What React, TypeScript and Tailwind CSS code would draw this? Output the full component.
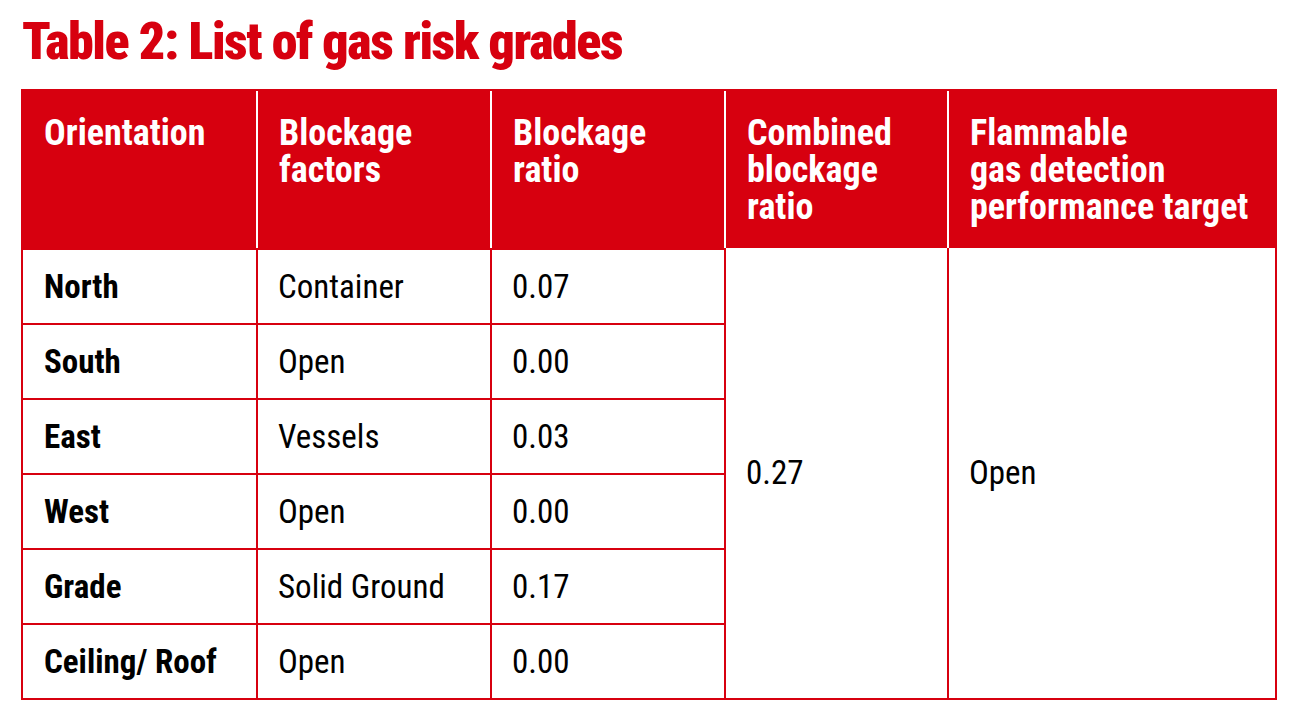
const FONT = "font-['Roboto','Liberation_Sans',sans-serif] [font-stretch:condensed]";

const rows = [
  { o: "North", f: "Container", r: "0.07" },
  { o: "South", f: "Open", r: "0.00" },
  { o: "East", f: "Vessels", r: "0.03" },
  { o: "West", f: "Open", r: "0.00" },
  { o: "Grade", f: "Solid Ground", r: "0.17" },
  { o: "Ceiling/ Roof", f: "Open", r: "0.00" },
];

const headers = [
  ["Orientation"],
  ["Blockage", "factors"],
  ["Blockage", "ratio"],
  ["Combined", "blockage", "ratio"],
  ["Flammable", "gas detection", "performance target"],
];

export default function App() {
  return (
    <div className={`w-[1300px] h-[724px] bg-white pt-[16px] ${FONT}`}>
      <h1 className="ml-[22px] text-[52px] leading-[52px] font-black text-[#d7000f] tracking-[-1.4px]">
        Table 2: List of gas risk grades
      </h1>

      <div className="ml-[21px] mt-[21px] w-[1256px] border-2 border-[#d7000f] grid grid-cols-[233px_234px_234px_223px_328px] grid-rows-[157px_repeat(6,75px)]">
        {headers.map((lines, i) => (
          <div
            key={i}
            className={`bg-[#d7000f] text-white font-bold text-[36px] leading-[37px] pt-[24px] pl-[21px] ${i > 0 ? "border-l-2 border-white" : ""}`}
          >
            {lines.map((l) => (
              <div key={l} className="whitespace-nowrap">{l}</div>
            ))}
          </div>
        ))}

        {rows.map((row, i) => (
          <div key={row.o} className="contents">
            <div className="flex items-center pl-[21px] border-t-2 border-[#d7000f] text-[33px] font-bold text-black whitespace-nowrap">
              {row.o}
            </div>
            <div className="flex items-center pl-[20px] border-t-2 border-l-2 border-[#d7000f] text-[33px] text-black">
              {row.f}
            </div>
            <div className="flex items-center pl-[20px] border-t-2 border-l-2 border-[#d7000f] text-[33px] text-black">
              {row.r}
            </div>
            {i === 0 && (
              <>
                <div className="row-span-6 flex items-center pl-[20px] border-l-2 border-[#d7000f] text-[33px] text-black">
                  0.27
                </div>
                <div className="row-span-6 flex items-center pl-[20px] border-l-2 border-[#d7000f] text-[33px] text-black">
                  Open
                </div>
              </>
            )}
          </div>
        ))}
      </div>
    </div>
  );
}
